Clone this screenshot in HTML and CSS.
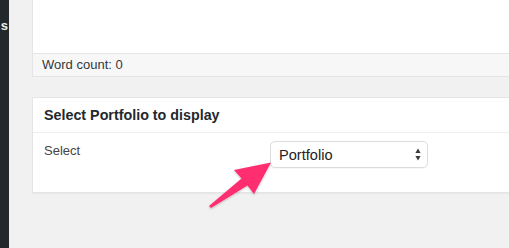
FILE: index.html
```html
<!DOCTYPE html>
<html>
<head>
<meta charset="utf-8">
<link rel="stylesheet" href="styles.css">
</head>
<body>
<div class="page">
  <aside class="sidebar"><span class="menu-label">s</span></aside>
  <main class="main">
    <section class="editor">
      <div class="editor-area"></div>
      <div class="word-count">Word count: 0</div>
    </section>
    <section class="postbox">
      <h2 class="postbox-title">Select Portfolio to display</h2>
      <div class="postbox-inside">
        <label class="field-label">Select</label>
        <div class="select">
          <span class="select-value">Portfolio</span>
          <svg class="select-arrows" width="6" height="13" viewBox="0 0 6 13">
            <path d="M3 0.5 L5.6 5 L0.4 5 Z" fill="#3a3a3a"/>
            <path d="M3 12.5 L5.6 8 L0.4 8 Z" fill="#3a3a3a"/>
          </svg>
        </div>
      </div>
    </section>
  </main>
  <svg class="annotation" width="509" height="248" viewBox="0 0 509 248">
    <defs>
      <filter id="sh" x="-20%" y="-20%" width="140%" height="140%">
        <feDropShadow dx="0" dy="1" stdDeviation="0.8" flood-color="#000" flood-opacity="0.25"/>
      </filter>
    </defs>
    <polygon filter="url(#sh)" fill="#fe2d6f" points="209,206 241.5,178.5 234,170 271,162.5 254,194 247.5,185.5 211,208"/>
  </svg>
</div>
</body>
</html>
```

FILE: styles.css
```css
html, body {
  margin: 0;
  padding: 0;
}
body {
  background: #f1f1f1;
  width: 509px;
  height: 248px;
  overflow: hidden;
  font-family: "Liberation Sans", Arial, sans-serif;
  color: #32373c;
}
.page {
  position: relative;
  display: flex;
  width: 509px;
  height: 248px;
  overflow: hidden;
}
.sidebar {
  flex: none;
  width: 9px;
  background: #23282d;
  overflow: hidden;
  display: flex;
  justify-content: flex-end;
  align-items: flex-start;
  padding-top: 18px;
  box-sizing: border-box;
}
.menu-label {
  flex: none;
  color: #eeeeee;
  font-size: 13px;
  font-weight: bold;
  line-height: 16px;
  margin-right: 1px;
  white-space: nowrap;
}
.main {
  flex: none;
  width: 520px;
  padding-left: 23px;
  display: flex;
  flex-direction: column;
  gap: 20px;
}
.editor {
  background: #fff;
  border-left: 1px solid #e5e5e5;
  border-bottom: 1px solid #e5e5e5;
}
.editor-area {
  height: 53px;
  background: #fff;
}
.word-count {
  height: 22px;
  background: #f7f7f7;
  border-top: 1px solid #e5e5e5;
  font-size: 13px;
  line-height: 22px;
  padding-left: 9px;
  color: #32373c;
}
.postbox {
  background: #fff;
  border: 1px solid #e5e5e5;
  border-right: none;
  box-shadow: 0 1px 1px rgba(0, 0, 0, 0.04);
}
.postbox-title {
  margin: 0;
  height: 34px;
  line-height: 35px;
  padding-left: 11px;
  font-size: 14.3px;
  font-weight: bold;
  color: #23282d;
  border-bottom: 1px solid #eeeeee;
}
.postbox-inside {
  display: flex;
  align-items: flex-start;
  padding: 8px 0 24px 11px;
}
.field-label {
  flex: none;
  width: 226px;
  font-size: 13px;
  line-height: 20px;
  color: #444;
}
.select {
  flex: none;
  width: 158px;
  height: 27px;
  box-sizing: border-box;
  border: 1px solid #dcdcdc;
  border-radius: 5px;
  background: #fff;
  display: flex;
  align-items: center;
  justify-content: space-between;
  padding: 0 6px 0 8px;
  box-shadow: 0 1px 1px rgba(0, 0, 0, 0.03);
}
.select-value {
  font-size: 14.6px;
  color: #222;
  line-height: 20px;
}
.select-arrows {
  display: block;
}
.annotation {
  position: absolute;
  left: 0;
  top: 0;
  pointer-events: none;
}
```
